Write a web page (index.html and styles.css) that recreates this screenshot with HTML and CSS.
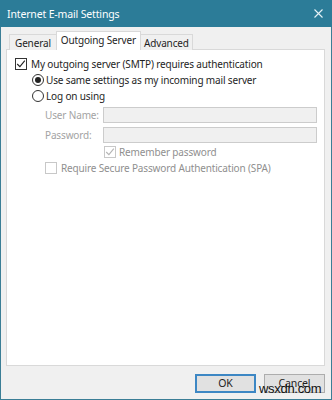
FILE: index.html
```html
<!DOCTYPE html>
<html>
<head>
<meta charset="utf-8">
<link rel="stylesheet" href="styles.css">
</head>
<body>
<div class="window">
  <div class="titlebar">
    <span class="title">Internet E-mail Settings</span>
    <svg class="close" width="9" height="9" viewBox="0 0 9 9"><path d="M0.5 0.5L8.5 8.5M8.5 0.5L0.5 8.5" stroke="#e6f2f6" stroke-width="1.1"/></svg>
  </div>
  <div class="content">
    <div class="tabs">
      <div class="tab first">General</div>
      <div class="tab active">Outgoing Server</div>
      <div class="tab">Advanced</div>
    </div>
    <div class="panel">
      <div class="row r1">
        <span class="cb checked"><svg width="10" height="10" viewBox="0 0 10 10"><path d="M1.2 5L3.9 7.7L8.8 1.6" fill="none" stroke="#222" stroke-width="1.1"/></svg></span>
        <span class="lbl">My outgoing server (SMTP) requires authentication</span>
      </div>
      <div class="row r2">
        <span class="radio on"><span class="dot"></span></span>
        <span class="lbl">Use same settings as my incoming mail server</span>
      </div>
      <div class="row r3">
        <span class="radio"></span>
        <span class="lbl">Log on using</span>
      </div>
      <div class="row field r4">
        <span class="flabel">User Name:</span>
        <span class="input"></span>
      </div>
      <div class="row field r5">
        <span class="flabel">Password:</span>
        <span class="input"></span>
      </div>
      <div class="row r6">
        <span class="cb dis"><svg width="10" height="10" viewBox="0 0 10 10"><path d="M1.2 5L3.9 7.7L8.8 1.6" fill="none" stroke="#b5b5b5" stroke-width="1.1"/></svg></span>
        <span class="lbl dim">Remember password</span>
      </div>
      <div class="row r7">
        <span class="cb dis"></span>
        <span class="lbl dim">Require Secure Password Authentication (SPA)</span>
      </div>
    </div>
    <div class="buttons">
      <div class="btn default">OK</div>
      <div class="btn">Cancel</div>
    </div>
  </div>
  <div class="watermark">wsxdn.com</div>
</div>
</body>
</html>
```

FILE: styles.css
```css
html, body {
  margin: 0;
  padding: 0;
}
body {
  width: 332px;
  height: 400px;
  background: #f0f0f0;
  font-family: "Noto Sans", "Open Sans", sans-serif;
  font-size: 10px;
  letter-spacing: -0.15px;
  color: #1e1e1e;
  overflow: hidden;
}
.window {
  position: relative;
  width: 332px;
  height: 400px;
  box-sizing: border-box;
  border: 1px solid #3b7e96;
  border-top: none;
  display: flex;
  flex-direction: column;
}
.titlebar {
  height: 27px;
  background: #2c7c98;
  display: flex;
  align-items: center;
  justify-content: space-between;
  padding: 0 9px 0 7px;
  margin: 0 -1px;
  color: #ffffff;
  font-size: 10.5px;
  letter-spacing: -0.15px;
}
.content {
  padding: 4px 6px 0 5px;
  flex: 1;
  display: flex;
  flex-direction: column;
}
.tabs {
  display: flex;
  align-items: flex-end;
  padding-left: 3px;
  height: 19px;
  position: relative;
  z-index: 1;
  margin-bottom: -1px;
}
.tab {
  height: 16px;
  line-height: 16px;
  padding: 0 3px;
  border: 1px solid #d9d9d9;
  border-bottom: none;
  background: #f0f0f0;
  box-sizing: border-box;
  font-size: 10px;
}
.tab.first { padding: 0 5px; }
.tab.active {
  height: 19px;
  line-height: 16px;
  background: #ffffff;
  padding: 0 4px;
}
.tab + .tab { margin-left: -1px; }
.panel {
  background: #ffffff;
  border: 1px solid #d9d9d9;
  height: 317px;
  box-sizing: border-box;
  padding-top: 7px;
}
.row {
  display: flex;
  align-items: center;
  height: 14px;
  white-space: nowrap;
}
.r1 { padding-left: 8px; }
.r2, .r3 { padding-left: 25px; margin-top: 2px; }
.field { padding-left: 38px; height: 16px; margin-top: 4px; }
.r6 { padding-left: 97px; margin-top: 2px; }
.r7 { padding-left: 38px; margin-top: 2px; }
.cb {
  width: 10px;
  height: 10px;
  border: 1px solid #333;
  background: #fff;
  display: inline-flex;
  align-items: center;
  justify-content: center;
  flex: none;
}
.cb.dis { border-color: #c8c8c8; }
.lbl { margin-left: 4px; }
.r6 .lbl { margin-left: 3px; }
.r7 .lbl { margin-left: 4px; }
.dim { color: #8f8f8f; }
.radio {
  width: 10px;
  height: 10px;
  border: 1px solid #333;
  border-radius: 50%;
  display: inline-flex;
  align-items: center;
  justify-content: center;
  flex: none;
}
.dot {
  width: 6px;
  height: 6px;
  border-radius: 50%;
  background: #222;
}
.r2 .lbl, .r3 .lbl { margin-left: 2px; }
.flabel {
  width: 58px;
  color: #a3a3a3;
}
.input {
  width: 214px;
  height: 16px;
  box-sizing: border-box;
  border: 1px solid #cccccc;
  background: #f0f0f0;
}
.buttons {
  display: flex;
  justify-content: flex-end;
  gap: 8px;
  padding-top: 8px;
}
.btn {
  width: 61px;
  height: 19px;
  box-sizing: border-box;
  border: 1px solid #adadad;
  background: #e1e1e1;
  text-align: center;
  line-height: 17px;
  font-size: 10.5px;
}
.btn.default {
  border: 2px solid #3d87c4;
  line-height: 15px;
}
.watermark {
  position: absolute;
  left: 258px;
  top: 381px;
  font-family: "Liberation Sans", sans-serif;
  font-size: 13px;
  letter-spacing: -0.3px;
  color: #111;
}
```
